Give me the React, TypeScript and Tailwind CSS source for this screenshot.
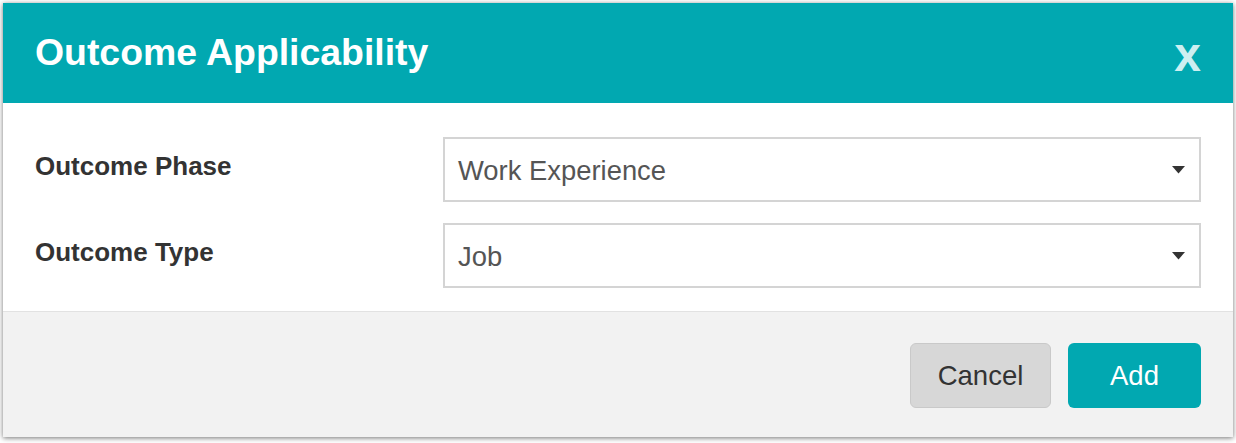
import React from 'react';

const fieldRows = [
  { label: 'Outcome Phase', value: 'Work Experience' },
  { label: 'Outcome Type', value: 'Job' },
];

const Caret: React.FC = () => (
  <svg width="13" height="8" viewBox="0 0 13 8" className="shrink-0">
    <path d="M0 0 H13 L6.5 7.5 Z" fill="#333" />
  </svg>
);

export default function App() {
  return (
    <div
      className="w-[1236px] h-[443px] bg-white pl-[3px] pt-[3px]"
      style={{ fontFamily: '"Liberation Sans", Arial, sans-serif' }}
    >
      <div className="w-[1230px] h-[434px] flex flex-col bg-white shadow-[0_1px_5px_rgba(0,0,0,0.55)]">
        <div className="h-[100px] shrink-0 bg-[#01a8b1] flex items-center justify-between pl-[32px] pr-[32px]">
          <h1 className="text-[37.4px] font-bold text-white leading-none">Outcome Applicability</h1>
          <button className="text-[48px] font-bold text-[#cdeff1] leading-none mt-[4px]">x</button>
        </div>

        <div className="flex flex-col gap-[21px] pt-[34px] pb-[23px] pl-[32px] pr-[32px] border-b border-[#e2e2e2]">
          {fieldRows.map((row) => (
            <div key={row.label} className="flex items-start">
              <label className="w-[408px] shrink-0 pt-[14px] text-[26px] font-bold text-[#333] leading-[30px]">
                {row.label}
              </label>
              <div className="flex-1 h-[65px] border-2 border-[#d4d4d4] flex items-center justify-between pl-[13px] pr-[14px]">
                <span className="text-[27.4px] text-[#555] leading-none mt-[2px]">{row.value}</span>
                <Caret />
              </div>
            </div>
          ))}
        </div>

        <div className="flex-1 bg-[#f2f2f2] flex justify-end items-start gap-[17px] pt-[31px] pr-[32px]">
          <button className="w-[141px] h-[65px] rounded-[6px] bg-[#d7d7d7] border border-[#c9c9c9] text-[27.5px] text-[#333]">
            Cancel
          </button>
          <button className="w-[133px] h-[65px] rounded-[6px] bg-[#01a8b1] text-[27.5px] text-white">
            Add
          </button>
        </div>
      </div>
    </div>
  );
}
